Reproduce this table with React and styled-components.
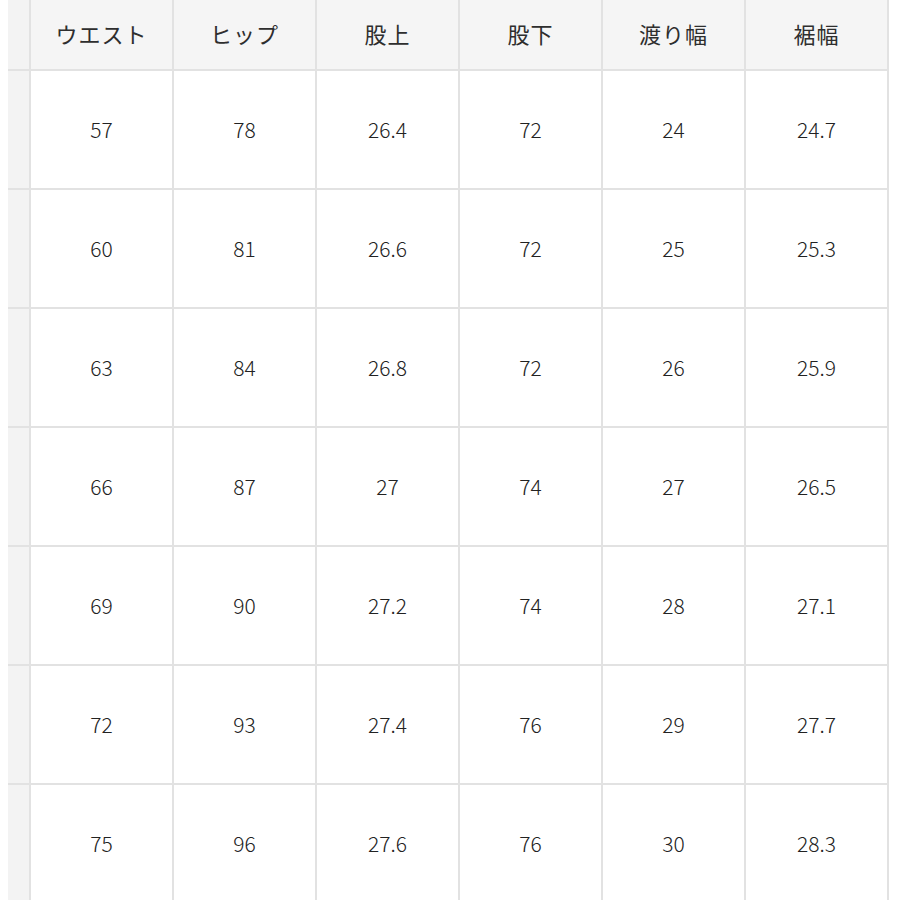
import { Fragment } from "react";
import styled, { createGlobalStyle } from "styled-components";

const GlobalStyle = createGlobalStyle`
  html, body {
    margin: 0;
    padding: 0;
    background: #ffffff;
    height: 900px;
    overflow: hidden;
  }
  body {
    font-family: "Noto Sans CJK JP", "Noto Sans", sans-serif;
  }
`;

const Page = styled.div`
  padding: 0 0 0 8px;
  width: 900px;
  box-sizing: border-box;
`;

const Grid = styled.div`
  display: grid;
  grid-template-columns: 21px repeat(6, 141px);
  grid-template-rows: 70px repeat(7, 117px);
  gap: 2px;
  padding: 0 2px 0 0;
  margin-top: -1px;
  width: max-content;
  background: #e2e2e2;
`;

const Cell = styled.div`
  display: flex;
  align-items: center;
  justify-content: center;
  background: ${({ $head }) => ($head ? "#f5f5f5" : "#ffffff")};
  color: ${({ $head }) => ($head ? "#2e2e2e" : "#222222")};
  font-weight: ${({ $head }) => ($head ? 400 : 300)};
  font-size: ${({ $head }) => ($head ? "22px" : "21px")};
  letter-spacing: ${({ $head }) => ($head ? "1px" : "0")};
  padding-bottom: ${({ $head }) => ($head ? "3px" : "1px")};
`;

const Side = styled.div`
  background: #f3f3f3;
`;

const headers = ["ウエスト", "ヒップ", "股上", "股下", "渡り幅", "裾幅"];

const rows = [
  ["57", "78", "26.4", "72", "24", "24.7"],
  ["60", "81", "26.6", "72", "25", "25.3"],
  ["63", "84", "26.8", "72", "26", "25.9"],
  ["66", "87", "27", "74", "27", "26.5"],
  ["69", "90", "27.2", "74", "28", "27.1"],
  ["72", "93", "27.4", "76", "29", "27.7"],
  ["75", "96", "27.6", "76", "30", "28.3"],
];

export default function App() {
  return (
    <>
      <GlobalStyle />
      <Page>
        <Grid>
          <Side />
          {headers.map((h) => (
            <Cell $head key={h}>{h}</Cell>
          ))}
          {rows.map((r, i) => (
            <Fragment key={i}>
              <Side />
              {r.map((v, j) => (
                <Cell key={j}>{v}</Cell>
              ))}
            </Fragment>
          ))}
        </Grid>
      </Page>
    </>
  );
}
